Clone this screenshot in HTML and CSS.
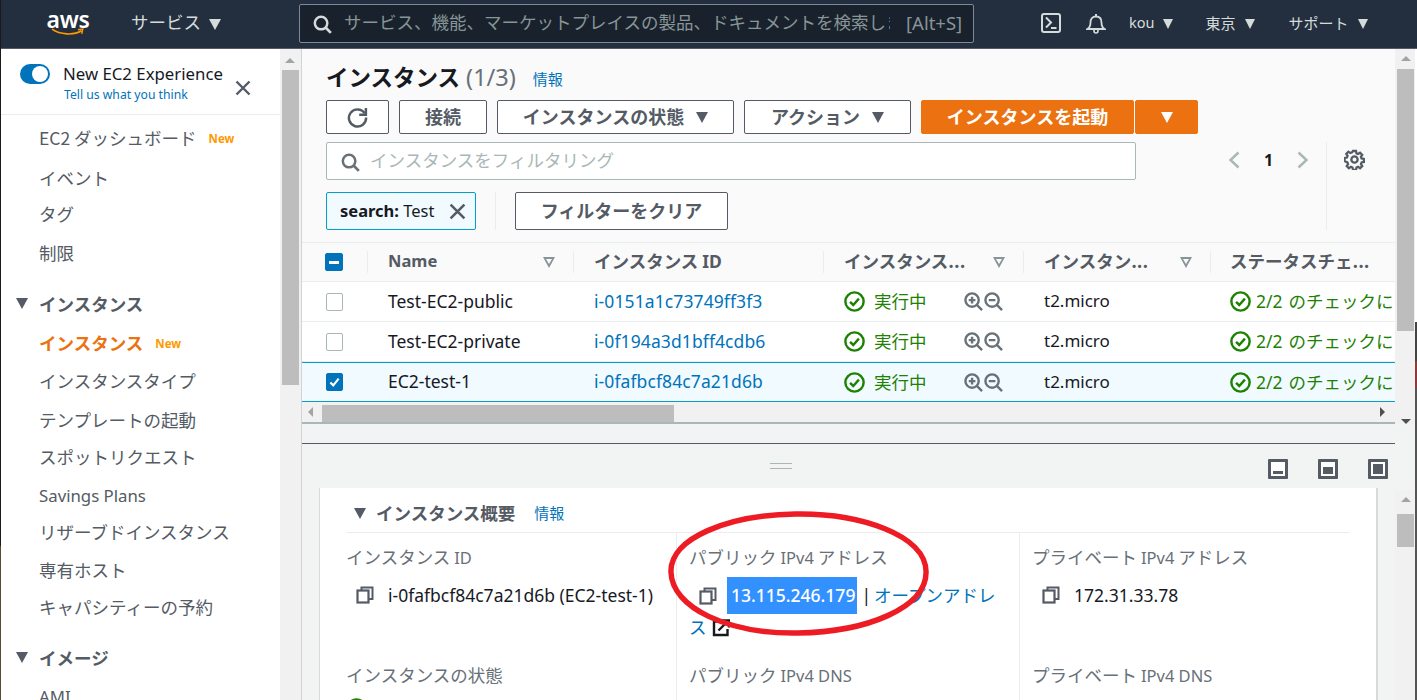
FILE: index.html
```html
<!DOCTYPE html>
<html lang="ja">
<head>
<meta charset="utf-8">
<title>インスタンス | EC2</title>
<link rel="stylesheet" href="styles.css">
</head>
<body>
<svg class="defs" width="0" height="0" aria-hidden="true">
  <defs>
    <symbol id="ok" viewBox="0 0 20 20"><circle cx="10" cy="10" r="8.7" fill="none" stroke="currentColor" stroke-width="2.3"/><path d="M5.8 10.3l3 3 5.4-6" fill="none" stroke="currentColor" stroke-width="2.3"/></symbol>
    <symbol id="zin" viewBox="0 0 20 20"><circle cx="8.5" cy="8.5" r="7" fill="none" stroke="currentColor" stroke-width="2.5"/><path d="M13.5 13.5l5.5 5.5M5 8.5h7M8.5 5v7" fill="none" stroke="currentColor" stroke-width="2.5"/></symbol>
    <symbol id="zout" viewBox="0 0 20 20"><circle cx="8.5" cy="8.5" r="7" fill="none" stroke="currentColor" stroke-width="2.5"/><path d="M13.5 13.5l5.5 5.5M5 8.5h7" fill="none" stroke="currentColor" stroke-width="2.5"/></symbol>
    <symbol id="copy" viewBox="0 0 18 18"><path d="M5.5 4V1.5h11V13H13" fill="none" stroke="currentColor" stroke-width="2"/><rect x="1.5" y="4.5" width="11" height="12" fill="none" stroke="currentColor" stroke-width="2.2"/></symbol>
    <symbol id="mag" viewBox="0 0 20 20"><circle cx="8.5" cy="8.5" r="6.6" fill="none" stroke="currentColor" stroke-width="2.6"/><path d="M13.2 13.2l5.6 5.6" fill="none" stroke="currentColor" stroke-width="2.8"/></symbol>
    <symbol id="x" viewBox="0 0 16 16"><path d="M1.5 1.5l13 13M14.5 1.5l-13 13" fill="none" stroke="currentColor" stroke-width="2.4"/></symbol>
  </defs>
</svg>

<div class="edge-left"></div>

<header class="topbar">
  <div class="logo">
    <span class="logo-text">aws</span>
    <svg class="logo-smile" viewBox="0 0 42 10"><path d="M1 1.5C11 8.5 28 9.500 38 3.500" fill="none" stroke="#f90" stroke-width="2"/><path d="M33.500 2.200l6-.9-1.300 6" fill="none" stroke="#f90" stroke-width="1.800"/></svg>
  </div>
  <div class="top-menu services"><span>サービス</span><i class="caret"></i></div>
  <div class="global-search">
    <svg class="gs-icon"><use href="#mag"/></svg>
    <span class="gs-text">サービス、機能、マーケットプレイスの製品、ドキュメントを検索します</span>
    <span class="gs-key">[Alt+S]</span>
  </div>
  <div class="top-right">
    <svg class="ti-shell" viewBox="0 0 20 20"><rect x="1" y="1" width="18" height="18" rx="2" fill="none" stroke="currentColor" stroke-width="2"/><path d="M5 4.500l5 5-5 5M10 15h5.500" fill="none" stroke="currentColor" stroke-width="2"/></svg>
    <svg class="ti-bell" viewBox="0 0 20 20"><path d="M1.500 15.500c2.500-1.500 3-3 3-6.500 0-3.500 2-6 5.500-6s5.500 2.500 5.500 6c0 3.500.5 5 3 6.500z" fill="none" stroke="currentColor" stroke-width="1.800"/><path d="M10 .5v2.500" stroke="currentColor" stroke-width="2"/><circle cx="10" cy="17.500" r="2" fill="none" stroke="currentColor" stroke-width="1.600"/></svg>
    <div class="top-menu small m-kou"><span class="latin">kou</span><i class="caret"></i></div>
    <div class="top-menu small m-tokyo"><span>東京</span><i class="caret"></i></div>
    <div class="top-menu small m-support"><span>サポート</span><i class="caret"></i></div>
  </div>
</header>

<div class="workspace">
  <aside class="sidebar">
    <div class="exp">
      <span class="toggle"></span>
      <div class="exp-text">
        <div class="exp-title">New EC2 Experience</div>
        <a class="exp-link">Tell us what you think</a>
      </div>
      <svg class="exp-x"><use href="#x"/></svg>
    </div>
    <nav class="nav">
      <a class="nav-item">EC2 ダッシュボード<b class="new">New</b></a>
      <a class="nav-item">イベント</a>
      <a class="nav-item">タグ</a>
      <a class="nav-item">制限</a>
      <a class="nav-head"><i class="tri"></i>インスタンス</a>
      <a class="nav-item active">インスタンス<b class="new">New</b></a>
      <a class="nav-item">インスタンスタイプ</a>
      <a class="nav-item">テンプレートの起動</a>
      <a class="nav-item">スポットリクエスト</a>
      <a class="nav-item latin-item">Savings Plans</a>
      <a class="nav-item">リザーブドインスタンス</a>
      <a class="nav-item">専有ホスト</a>
      <a class="nav-item">キャパシティーの予約</a>
      <a class="nav-head"><i class="tri"></i>イメージ</a>
      <a class="nav-item latin-item">AMI</a>
    </nav>
  </aside>

  <div class="vscroll side-scroll">
    <i class="arrow-up"></i>
    <div class="thumb"></div>
  </div>

  <main class="main">
    <section class="upper">
      <div class="title-row">
        <h1 class="title">インスタンス</h1>
        <span class="count">(1/3)</span>
        <a class="info">情報</a>
      </div>
      <div class="actions">
        <button class="btn b-refresh"><svg viewBox="0 0 22 22"><path d="M18.500 6.500A9 9 0 1 0 20 11" fill="none" stroke="#545b64" stroke-width="2.600"/><path d="M19.800 1v7h-7" fill="none" stroke="#545b64" stroke-width="2.600"/></svg></button>
        <button class="btn b-connect"><span>接続</span></button>
        <button class="btn b-state"><span>インスタンスの状態</span><i class="caret dark"></i></button>
        <button class="btn b-action"><span>アクション</span><i class="caret dark"></i></button>
        <button class="btn primary b-launch"><span>インスタンスを起動</span></button>
        <button class="btn primary b-split"><i class="caret white"></i></button>
      </div>
      <div class="filter-area">
        <div class="filter-left">
          <div class="filter">
            <svg class="filter-icon"><use href="#mag"/></svg>
            <span class="filter-ph">インスタンスをフィルタリング</span>
          </div>
          <div class="chips">
            <span class="chip"><span class="chip-text"><b>search:</b> Test</span><svg class="chip-x"><use href="#x"/></svg></span>
            <span class="chips-sep"></span>
            <button class="btn b-clear"><span>フィルターをクリア</span></button>
          </div>
        </div>
        <div class="pager">
          <svg class="pg" viewBox="0 0 12 18"><path d="M10.500 1.500L2.500 9l8 7.500" fill="none" stroke="#aab7b8" stroke-width="2.400"/></svg>
          <b class="pg-num">1</b>
          <svg class="pg" viewBox="0 0 12 18"><path d="M1.500 1.500L9.500 9l-8 7.500" fill="none" stroke="#aab7b8" stroke-width="2.400"/></svg>
        </div>
        <div class="settings">
          <svg class="gear" viewBox="0 0 20 20"><circle cx="10" cy="10" r="3" fill="none" stroke="#545b64" stroke-width="2.200"/><path d="M8.400 1h3.200l.5 2.500 1.700.7 2.100-1.400 2.300 2.300-1.400 2.100.7 1.700 2.500.5v3.200l-2.500.5-.7 1.700 1.400 2.100-2.300 2.300-2.100-1.400-1.700.7-.5 2.500H8.400l-.5-2.500-1.700-.7-2.100 1.400-2.300-2.300 1.400-2.100-.7-1.700L-.5 11.600V8.400l2.500-.5.700-1.700-1.400-2.100 2.300-2.300 2.100 1.400 1.700-.7z" transform="translate(1 1) scale(.9)" fill="none" stroke="#545b64" stroke-width="2.400"/></svg>
        </div>
      </div>

      <div class="table">
        <div class="row head">
          <div class="cell c-check"><span class="cb minus"></span></div>
          <div class="cell c-name"><span class="t">Name</span><i class="sort"></i></div>
          <div class="cell c-id"><span class="t">インスタンス <span class="latin">ID</span></span></div>
          <div class="cell c-state"><span class="t">インスタンス...</span><i class="sort"></i></div>
          <div class="cell c-type"><span class="t">インスタン...</span><i class="sort"></i></div>
          <div class="cell c-status"><span class="t">ステータスチェ...</span></div>
        </div>
        <div class="row">
          <div class="cell c-check"><span class="cb"></span></div>
          <div class="cell c-name latin"><span class="t">Test-EC2-public</span></div>
          <div class="cell c-id"><a class="link latin t">i-0151a1c73749ff3f3</a></div>
          <div class="cell c-state"><svg class="ok"><use href="#ok"/></svg><span class="green t">実行中</span><span class="zooms"><svg><use href="#zin"/></svg><svg><use href="#zout"/></svg></span></div>
          <div class="cell c-type latin"><span class="t">t2.micro</span></div>
          <div class="cell c-status"><svg class="ok"><use href="#ok"/></svg><span class="green t"><span class="latin">2/2</span> のチェックに合格しました</span></div>
        </div>
        <div class="row">
          <div class="cell c-check"><span class="cb"></span></div>
          <div class="cell c-name latin"><span class="t">Test-EC2-private</span></div>
          <div class="cell c-id"><a class="link latin t">i-0f194a3d1bff4cdb6</a></div>
          <div class="cell c-state"><svg class="ok"><use href="#ok"/></svg><span class="green t">実行中</span><span class="zooms"><svg><use href="#zin"/></svg><svg><use href="#zout"/></svg></span></div>
          <div class="cell c-type latin"><span class="t">t2.micro</span></div>
          <div class="cell c-status"><svg class="ok"><use href="#ok"/></svg><span class="green t"><span class="latin">2/2</span> のチェックに合格しました</span></div>
        </div>
        <div class="row selected">
          <div class="cell c-check"><span class="cb checked"><svg viewBox="0 0 18 18"><path d="M4 9.500l3.500 3.500L14 5" fill="none" stroke="#fff" stroke-width="2.600"/></svg></span></div>
          <div class="cell c-name latin"><span class="t">EC2-test-1</span></div>
          <div class="cell c-id"><a class="link latin t">i-0fafbcf84c7a21d6b</a></div>
          <div class="cell c-state"><svg class="ok"><use href="#ok"/></svg><span class="green t">実行中</span><span class="zooms"><svg><use href="#zin"/></svg><svg><use href="#zout"/></svg></span></div>
          <div class="cell c-type latin"><span class="t">t2.micro</span></div>
          <div class="cell c-status"><svg class="ok"><use href="#ok"/></svg><span class="green t"><span class="latin">2/2</span> のチェックに合格しました</span></div>
        </div>
      </div>
      <div class="hscroll">
        <i class="arrow-left"></i>
        <div class="hthumb"></div>
        <i class="arrow-right"></i>
      </div>
    </section>

    <div class="gap-band"></div>

    <section class="split-bar">
      <div class="handle"></div>
      <div class="pane-icons">
        <span class="pane p1"></span>
        <span class="pane p2"></span>
        <span class="pane p3"></span>
      </div>
    </section>

    <section class="detail">
      <div class="detail-inner">
        <div class="detail-head"><i class="tri"></i><h2>インスタンス概要</h2><a class="info">情報</a></div>
        <div class="grid">
          <div class="col">
            <div class="label">インスタンス <span class="latin">ID</span></div>
            <div class="value"><svg class="copy"><use href="#copy"/></svg><span class="latin">i-0fafbcf84c7a21d6b (EC2-test-1)</span></div>
            <div class="label second">インスタンスの状態</div>
            <svg class="ok next"><use href="#ok"/></svg>
          </div>
          <div class="col">
            <div class="label">パブリック <span class="latin">IPv4</span> アドレス</div>
            <div class="value wrap"><svg class="copy"><use href="#copy"/></svg><span class="sel latin">13.115.246.179</span><span class="bar latin">|</span><a class="link">オープンアドレス<svg class="ext" viewBox="0 0 18 18"><path d="M8 2.500H2v13.500h13.500v-6" fill="none" stroke="#16191f" stroke-width="2.400"/><path d="M6.500 11.500L15.500 2.500M10 1.500h7v7" fill="none" stroke="#16191f" stroke-width="2.400"/></svg></a></div>
            <div class="label second tight">パブリック <span class="latin">IPv4 DNS</span></div>
          </div>
          <div class="col">
            <div class="label">プライベート <span class="latin">IPv4</span> アドレス</div>
            <div class="value"><svg class="copy"><use href="#copy"/></svg><span class="latin">172.31.33.78</span></div>
            <div class="label second">プライベート <span class="latin">IPv4 DNS</span></div>
          </div>
        </div>
      </div>
    </section>
  </main>

  <div class="right-rail">
    <div class="vscroll rail-top">
      <i class="arrow-up"></i>
      <div class="thumb"></div>
      <i class="arrow-down"></i>
    </div>
    <div class="rail-gap"></div>
    <div class="vscroll rail-bottom">
      <i class="arrow-up"></i>
      <div class="thumb"></div>
    </div>
  </div>
  <div class="edge-right"></div>
</div>

<svg class="annotation" viewBox="0 0 270 130" preserveAspectRatio="none" aria-hidden="true">
  <path d="M130 4C195 3 262 25 262 62c0 36-60 60-130 61C62 124 5 98 4 62 3 28 62 5 130 4z" fill="none" stroke="#ed1c24" stroke-width="5.500"/>
</svg>
</body>
</html>
```

FILE: styles.css
```css
* { box-sizing: border-box; }
html, body { margin: 0; padding: 0; }
body {
  position: relative;
  width: 1417px;
  height: 700px;
  overflow: hidden;
  background: #fff;
  font-family: "Noto Sans CJK JP", "Noto Sans", sans-serif;
  font-size: 17.5px;
  color: #16191f;
  display: flex;
  flex-direction: column;
}
.defs { position: absolute; }
.latin { font-family: "Noto Sans", "Noto Sans CJK JP", sans-serif; font-size: 17.5px; }
.caret {
  display: inline-block;
  width: 0; height: 0;
  border-left: 6.500px solid transparent;
  border-right: 6.500px solid transparent;
  border-top: 11px solid #d5dbdb;
}
.caret.dark { border-top-color: #545b64; margin-left: 12px; }
.caret.white { border-top-color: #fff; }

/* top bar */
.topbar {
  height: 49px;
  flex: none;
  background: #232f3e;
  border-bottom: 1px solid #545b64;
  display: flex;
  align-items: center;
  color: #d5dbdb;
  padding-left: 47px;
}
.logo { width: 42px; height: 26px; position: relative; margin-top: -2px; display: flex; flex-direction: column; align-items: center; }
.logo-text { font: 600 23px/19px "Noto Sans", sans-serif; color: #fff; letter-spacing: -.3px; }
.logo-smile { width: 42px; height: 10px; margin-top: -1px; }
.top-menu { display: flex; align-items: center; gap: 8px; font-size: 17.500px; white-space: nowrap; }
.top-menu span { margin-top: -4px; }
.services { margin-left: 42px; width: 168px; line-height: 1; }
.global-search {
  width: 675px; height: 39px;
  margin-top: -2px;
  background: #19212c;
  border: 1px solid #7d8998;
  border-radius: 2px;
  display: flex;
  align-items: center;
  padding-left: 13px;
}
.gs-icon { width: 19px; height: 19px; color: #d5dbdb; flex: none; margin-top: 3px; }
.gs-text { color: #879596; margin: -4px 0 0 12px; width: 546px; overflow: hidden; white-space: nowrap; font-size: 17.500px; }
.gs-key { color: #879596; margin-left: 16px; font-family: "Noto Sans", sans-serif; font-size: 18.500px; margin-top: -2px; }
.top-right { display: flex; align-items: center; margin-left: 67px; }
.ti-shell { width: 20px; height: 20px; color: #d5dbdb; margin-top: -2px; }
.ti-bell { width: 20px; height: 21px; color: #d5dbdb; margin: -2px 0 0 25px; }
.small { font-size: 15px; gap: 9px; }
.small .latin { font-size: 14.500px; }
.small .caret { border-left-width: 5.500px; border-right-width: 5.500px; border-top-width: 10px; }
.m-kou { margin-left: 23px; }
.m-tokyo { margin-left: 32px; }
.m-support { margin-left: 34px; }

/* workspace */
.workspace { display: flex; flex: 1; min-height: 0; }
.edge-left { position: absolute; left: 0; top: 0; bottom: 0; width: 1px; background: linear-gradient(#1a1a1a 0 78%, #5a4a30 78%); z-index: 2; }
.edge-right { width: 2px; flex: none; background: linear-gradient(#fff 0 42%, #444 42% 48%, #8c3a3a 48% 52%, #555 52% 100%); }

/* sidebar */
.sidebar { width: 280px; flex: none; background: #fff; overflow: hidden; }
.exp { height: 66px; border-bottom: 1px solid #eaeded; display: flex; padding: 15px 0 0 20px; position: relative; }
.toggle { width: 30px; height: 20px; border-radius: 10px; background: #0073bb; position: relative; flex: none; }
.toggle::after { content: ""; position: absolute; right: 2px; top: 2px; width: 16px; height: 16px; background: #fff; border-radius: 50%; }
.exp-text { margin-left: 13px; margin-top: -1px; }
.exp-title { font: 400 16.800px/22px "Noto Sans", sans-serif; color: #16191f; white-space: nowrap; }
.exp-link { display: block; font: 400 12.200px/18px "Noto Sans", sans-serif; color: #0073bb; margin-top: 1px; margin-left: 1px; }
.exp-x { width: 16px; height: 16px; color: #545b64; position: absolute; left: 235px; top: 31px; }
.nav {
  display: grid;
  grid-template-rows: 40px 36px 39px 51px 39px 38px 39px 37px 39px 36px 38px 37px 51px 39px 24px;
  align-items: start;
  padding-top: 10px;
  color: #545b64;
}
.nav a { display: flex; align-items: center; height: 24px; white-space: nowrap; padding-left: 39px; position: relative; }
.nav-head { font-weight: 700; }
.nav-item.active { color: #ec7211; font-weight: 700; }
.latin-item { font-family: "Noto Sans", sans-serif; font-size: 16.800px; }
.new { color: #ff9900; font: 700 11.500px "Noto Sans", sans-serif; margin-left: 12px; margin-top: 3px; }
.tri {
  width: 0; height: 0;
  border-left: 6.500px solid transparent;
  border-right: 6.500px solid transparent;
  border-top: 11px solid #545b64;
  display: inline-block;
}
.nav-head .tri { position: absolute; left: 16px; top: 50%; margin-top: -5px; }

/* scrollbars */
.vscroll { background: #f1f1f1; display: flex; flex-direction: column; align-items: center; position: relative; }
.thumb { background: #bdbdbd; }
.arrow-up { width: 0; height: 0; border: 5px solid transparent; border-top: 0; border-bottom: 5px solid #a3a3a3; }
.arrow-down { width: 0; height: 0; border: 5px solid transparent; border-bottom: 0; border-top: 5px solid #505050; }
.side-scroll { width: 22px; flex: none; border-right: 1px solid #d0d4d4; padding-right: 1px; }
.side-scroll .arrow-up { margin-top: 9px; }
.side-scroll .thumb { width: 17px; height: 315px; margin-top: 7px; }

/* main */
.main { width: 1093px; flex: none; display: flex; flex-direction: column; background: #f2f3f3; min-width: 0; }
.upper { height: 375px; flex: none; background: #fafafa; display: flex; flex-direction: column; }
.title-row { display: flex; align-items: center; height: 51px; padding: 4px 0 0 24px; }
.title { font-size: 22.500px; font-weight: 700; margin: 0; color: #16191f; line-height: 1; }
.count { font-family: "Noto Sans", sans-serif; font-size: 23.500px; color: #687078; margin-left: 6px; }
.info { font-size: 15px; color: #0073bb; margin-left: 17px; }
.title-row .info { margin-top: 4px; }
.actions { display: flex; padding-left: 24px; gap: 10px; height: 34px; }
.btn {
  font-family: inherit;
  font-size: 18px;
  font-weight: 700;
  color: #545b64;
  background: #fff;
  border: 1px solid #545b64;
  border-radius: 2px;
  height: 34px;
  padding: 0;
  display: flex;
  align-items: center;
  justify-content: center;
  line-height: 1;
  white-space: nowrap;
}
.btn span { margin-top: -3px; }
.btn.primary { background: #ec7211; border-color: #ec7211; color: #fff; }
.b-refresh { width: 63px; }
.b-refresh svg { width: 21px; height: 21px; }
.b-connect { width: 88px; }
.b-state { width: 237px; }
.b-action { width: 167px; }
.b-launch { width: 213px; }
.b-split { width: 63px; margin-left: -9px; }
.filter-area { display: flex; padding: 8px 0 0 24px; height: 108px; flex: none; }
.filter-left { width: 810px; flex: none; }
.filter { height: 38px; background: #fff; border: 1px solid #aab7b8; border-radius: 2px; display: flex; align-items: center; padding-left: 14px; }
.filter-icon { width: 19px; height: 19px; color: #687078; flex: none; margin-top: 2px; }
.filter-ph { color: #aab7b8; margin: -4px 0 0 10px; }
.chips { display: flex; margin-top: 12px; height: 38px; align-items: stretch; }
.chip { width: 150px; background: #f1faff; border: 1px solid #00a1c9; border-radius: 2px; display: flex; align-items: center; padding-left: 13px; font-family: "Noto Sans", sans-serif; font-size: 16.500px; white-space: pre; color: #16191f; position: relative; }
.chip-text { margin-top: -2px; }
.chip b { font-weight: 700; }
.chip-x { width: 17px; height: 17px; color: #545b64; position: absolute; left: 122px; top: 10px; }
.chips-sep { width: 1px; background: #eaeded; margin-left: 19px; }
.b-clear { width: 213px; height: 38px; margin-left: 19px; }
.pager { display: flex; align-items: flex-start; padding: 9px 0 0 92px; width: 190px; flex: none; }
.pg { width: 12px; height: 18px; flex: none; }
.pg-num { font: 700 16px/18px "Noto Sans", sans-serif; width: 57px; text-align: center; }
.settings { border-left: 1px solid #eaeded; height: 88px; width: 60px; padding: 7px 0 0 17px; flex: none; }
.gear { width: 21px; height: 21px; }

/* table */
.table { height: 160px; overflow: hidden; flex: none; }
.row { display: grid; grid-template-columns: 65px 206px 250px 200px 187px 184px; height: 40px; background: #fff; border-bottom: 1px solid #eaeded; }
.row.head { background: #fafafa; border-top: 1px solid #eaeded; font-weight: 700; color: #545b64; }
.row.head .c-name { font-family: "Noto Sans", sans-serif; font-size: 16.500px; }
.row.head .latin { font-weight: 700; }
.row.head .t { margin-top: -3px; }
.t { margin-top: -2px; }
.row.selected { background: #f1faff; border-top: 1px solid #00a1c9; border-bottom: 1px solid #00a1c9; }
.cell { display: flex; align-items: center; padding-left: 21px; white-space: nowrap; overflow: hidden; position: relative; }
.row.head .cell:not(.c-check)::before { content: ""; position: absolute; left: 0; top: 8px; bottom: 8px; width: 1px; background: #eaeded; }
.c-check { padding-left: 24px; }
.c-status { padding-left: 20px; }
.c-id .link { letter-spacing: .1px; }
.c-type.latin { font-size: 17px; }
.sort {
  position: absolute; right: 18px; top: 14px; width: 12px; height: 11px;
  background: #879596;
  clip-path: polygon(0 0, 100% 0, 50% 100%);
}
.sort::after { content: ""; position: absolute; left: 3px; top: 2px; width: 6px; height: 5px; background: #fafafa; clip-path: polygon(0 0, 100% 0, 50% 100%); }
.cb { width: 17px; height: 18px; background: #fff; border: 1px solid #aab7b8; border-radius: 2px; display: block; flex: none; }
.cb.minus { width: 18px; margin-left: -1px; background: #0073bb; border-color: #0073bb; position: relative; }
.cb.minus::after { content: ""; position: absolute; left: 3px; right: 3px; top: 7px; height: 2.500px; background: #fff; }
.cb.checked { background: #0073bb; border-color: #0073bb; }
.cb.checked svg { display: block; width: 15px; height: 16px; }
.link { color: #0073bb; }
.green { color: #1d8102; }
.green .latin { font-size: 17.500px; }
.green.t { word-spacing: 2px; }
.ok { width: 21px; height: 21px; color: #1d8102; flex: none; }
.c-state .ok { margin-right: 9px; }
.c-status .ok { margin-right: 5px; }
.zooms { display: flex; gap: 1px; margin-left: 37px; color: #687078; }
.zooms svg { width: 19px; height: 19px; }

.hscroll { height: 22px; flex: none; background: #f1f1f1; border-bottom: 2px solid #aab7b8; display: flex; align-items: center; padding-left: 6px; position: relative; }
.arrow-left { width: 0; height: 0; border: 5px solid transparent; border-left: 0; border-right: 5px solid #a3a3a3; }
.hthumb { width: 352px; height: 17px; background: #bdbdbd; margin-left: 9px; margin-top: 2px; }
.arrow-right { width: 0; height: 0; border: 5px solid transparent; border-right: 0; border-left: 5px solid #505050; margin-left: 706px; }

.gap-band { height: 20px; flex: none; background: #f2f3f3; border-bottom: 1px solid #545b64; }
.split-bar { height: 44px; flex: none; display: flex; justify-content: flex-end; position: relative; }
.handle { position: absolute; left: 468px; top: 19px; width: 22px; height: 6px; border-top: 1px solid #aab7b8; border-bottom: 1px solid #aab7b8; }
.pane-icons { display: flex; gap: 30px; padding: 15px 7px 0 0; }
.pane { width: 20px; height: 20px; background: #545b64; border-radius: 1px; position: relative; }
.pane::after { content: ""; position: absolute; left: 3px; right: 3px; top: 3px; bottom: 3px; background: #fff; }
.pane::before { content: ""; position: absolute; z-index: 1; background: #545b64; left: 5px; right: 5px; }
.p1::before { top: 12px; bottom: 5px; }
.p2::before { top: 8px; bottom: 5px; }
.p3::before { top: 5px; bottom: 5px; }

.detail { flex: 1; min-height: 0; padding: 0 17px 0 17px; overflow: hidden; }
.detail-inner { background: #fff; border-left: 1px solid #d5dbdb; border-right: 2px solid #d5dbdb; height: 100%; padding: 0 26px; overflow: hidden; }
.detail-head { display: flex; align-items: center; height: 45px; border-bottom: 1px solid #eaeded; padding: 6px 0 0 8px; }
.detail-head h2 { margin: -1px 0 0 10px; font-size: 17.500px; font-weight: 700; color: #545b64; }
.detail-head .info { margin: -1px 0 0 19px; }
.grid { display: grid; grid-template-columns: 330px 343px 1fr; }
.col { border-left: 1px solid #eaeded; padding: 10px 0 0 12px; height: 200px; position: relative; }
.col:first-child { border-left: 0; padding-left: 0; }
.label { color: #687078; font-size: 17.500px; line-height: 28px; white-space: nowrap; }
.label .latin { font-size: 16.500px; }
.value { display: flex; align-items: center; margin: 4px 0 0 10px; height: 38px; white-space: nowrap; }
.value.wrap { display: block; white-space: normal; width: 320px; margin-left: 0; height: auto; line-height: 31px; margin-top: 7px; }
.copy { width: 18px; height: 18px; color: #545b64; flex: none; margin-right: 14px; }
.wrap .copy { margin: 0 10px 0 10px; vertical-align: -3px; }
.sel { background: #3390ff; color: #fff; padding: 6px 2px 7px 4px; font-weight: 500; }
.bar { margin: 0 3px 0 4px; }
.wrap .link { font-size: 17.500px; }
.ext { width: 18px; height: 18px; vertical-align: -3px; margin-left: 5px; }
.second { margin-top: 47px; }
.second.tight { margin-top: 19px; }
.next { position: absolute; left: 0; top: 165px; }

/* right rail */
.right-rail { width: 20px; flex: none; display: flex; flex-direction: column; background: #f2f3f3; }
.rail-top { height: 375px; flex: none; align-items: center; padding-left: 1px; background: #f1f1f1; }
.rail-top .arrow-up { margin-top: 7px; }
.rail-top .thumb { width: 17px; height: 270px; margin-top: 8px; }
.rail-top .arrow-down { margin-top: 88px; }
.rail-gap { height: 66px; flex: none; }
.rail-bottom { flex: 1; padding-left: 1px; background: #f1f1f1; }
.rail-bottom .arrow-up { margin-top: 7px; }
.rail-bottom .thumb { width: 17px; height: 33px; margin-top: 12px; }

.annotation { position: absolute; left: 667px; top: 510px; width: 267px; height: 130px; z-index: 5; }
```
